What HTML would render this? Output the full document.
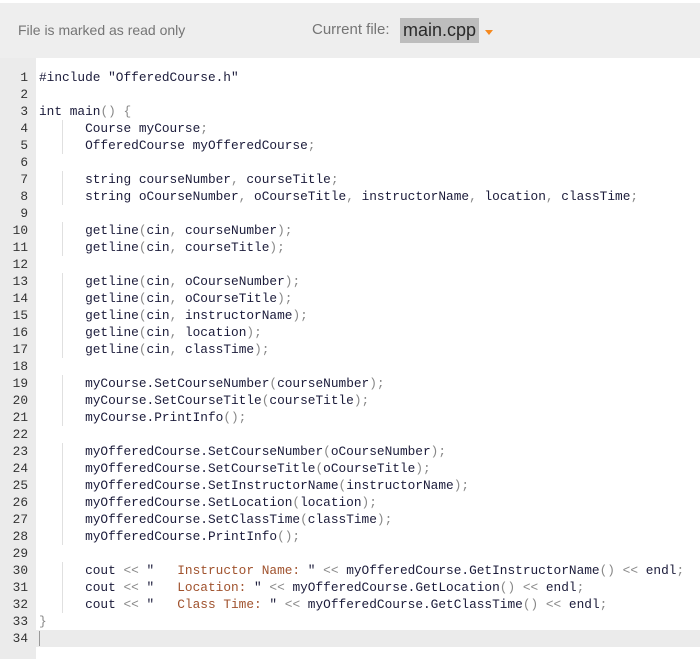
<!DOCTYPE html>
<html><head><meta charset="utf-8"><style>
body{margin:0;width:700px;height:659px;background:#fff;overflow:hidden;position:relative;font-family:"Liberation Sans",sans-serif}
.hdr{position:absolute;left:0;top:3px;width:700px;height:55px;background:#eeeeee}
.ro{position:absolute;left:18px;top:22px;font-size:14px;color:#757575}
.cf{position:absolute;left:312px;top:21px;font-size:15px;color:#757575}
.fn{position:absolute;left:400px;top:18px;width:79px;height:25px;background:#bdbdbd;color:#2a2a2a;font-size:18px;line-height:25px;text-align:center}
.tri{position:absolute;left:485px;top:30px;width:0;height:0;border-left:4px solid transparent;border-right:4px solid transparent;border-top:5px solid #f5891f}
.gut{position:absolute;left:0;top:58px;width:36px;height:601px;background:#ebebeb}
.cur{position:absolute;left:36px;top:630px;width:664px;height:17px;background:#ebebeb}
.caret{position:absolute;left:39px;top:631px;width:1px;height:15px;background:#999}
.code{position:absolute;left:0;top:69px;font-family:"Liberation Mono",monospace;font-size:12.8px;line-height:17px;color:#1b1b3a;white-space:pre}
.ln{display:inline-block;width:28px;text-align:right;color:#333;margin-right:11px}
.p{color:#888}.s{color:#a0522d}.g{position:absolute;left:62px;width:1px;background:#e0e0e0}
</style></head><body>
<div class="hdr"></div>
<div class="ro">File is marked as read only</div>
<div class="cf">Current file:</div>
<div class="fn">main.cpp</div>
<div class="tri"></div>
<div class="gut"></div>
<div class="cur"></div>
<div class="caret"></div>
<div class="g" style="top:120px;height:34px"></div>
<div class="g" style="top:171px;height:34px"></div>
<div class="g" style="top:222px;height:34px"></div>
<div class="g" style="top:273px;height:85px"></div>
<div class="g" style="top:375px;height:51px"></div>
<div class="g" style="top:443px;height:102px"></div>
<div class="g" style="top:562px;height:51px"></div>
<div class="code"><span class="ln">1</span>#include "OfferedCourse.h"
<span class="ln">2</span>
<span class="ln">3</span>int main<span class="p">()</span> <span class="p">{</span>
<span class="ln">4</span>      Course myCourse<span class="p">;</span>
<span class="ln">5</span>      OfferedCourse myOfferedCourse<span class="p">;</span>
<span class="ln">6</span>
<span class="ln">7</span>      string courseNumber<span class="p">,</span> courseTitle<span class="p">;</span>
<span class="ln">8</span>      string oCourseNumber<span class="p">,</span> oCourseTitle<span class="p">,</span> instructorName<span class="p">,</span> location<span class="p">,</span> classTime<span class="p">;</span>
<span class="ln">9</span>
<span class="ln">10</span>      getline<span class="p">(</span>cin<span class="p">,</span> courseNumber<span class="p">);</span>
<span class="ln">11</span>      getline<span class="p">(</span>cin<span class="p">,</span> courseTitle<span class="p">);</span>
<span class="ln">12</span>
<span class="ln">13</span>      getline<span class="p">(</span>cin<span class="p">,</span> oCourseNumber<span class="p">);</span>
<span class="ln">14</span>      getline<span class="p">(</span>cin<span class="p">,</span> oCourseTitle<span class="p">);</span>
<span class="ln">15</span>      getline<span class="p">(</span>cin<span class="p">,</span> instructorName<span class="p">);</span>
<span class="ln">16</span>      getline<span class="p">(</span>cin<span class="p">,</span> location<span class="p">);</span>
<span class="ln">17</span>      getline<span class="p">(</span>cin<span class="p">,</span> classTime<span class="p">);</span>
<span class="ln">18</span>
<span class="ln">19</span>      myCourse.SetCourseNumber<span class="p">(</span>courseNumber<span class="p">);</span>
<span class="ln">20</span>      myCourse.SetCourseTitle<span class="p">(</span>courseTitle<span class="p">);</span>
<span class="ln">21</span>      myCourse.PrintInfo<span class="p">();</span>
<span class="ln">22</span>
<span class="ln">23</span>      myOfferedCourse.SetCourseNumber<span class="p">(</span>oCourseNumber<span class="p">);</span>
<span class="ln">24</span>      myOfferedCourse.SetCourseTitle<span class="p">(</span>oCourseTitle<span class="p">);</span>
<span class="ln">25</span>      myOfferedCourse.SetInstructorName<span class="p">(</span>instructorName<span class="p">);</span>
<span class="ln">26</span>      myOfferedCourse.SetLocation<span class="p">(</span>location<span class="p">);</span>
<span class="ln">27</span>      myOfferedCourse.SetClassTime<span class="p">(</span>classTime<span class="p">);</span>
<span class="ln">28</span>      myOfferedCourse.PrintInfo<span class="p">();</span>
<span class="ln">29</span>
<span class="ln">30</span>      cout <span class="p">&lt;&lt;</span> "<span class="s">   Instructor Name: </span>" <span class="p">&lt;&lt;</span> myOfferedCourse.GetInstructorName<span class="p">()</span> <span class="p">&lt;&lt;</span> endl<span class="p">;</span>
<span class="ln">31</span>      cout <span class="p">&lt;&lt;</span> "<span class="s">   Location: </span>" <span class="p">&lt;&lt;</span> myOfferedCourse.GetLocation<span class="p">()</span> <span class="p">&lt;&lt;</span> endl<span class="p">;</span>
<span class="ln">32</span>      cout <span class="p">&lt;&lt;</span> "<span class="s">   Class Time: </span>" <span class="p">&lt;&lt;</span> myOfferedCourse.GetClassTime<span class="p">()</span> <span class="p">&lt;&lt;</span> endl<span class="p">;</span>
<span class="ln">33</span><span class="p">}</span>
<span class="ln">34</span></div>
</body></html>
